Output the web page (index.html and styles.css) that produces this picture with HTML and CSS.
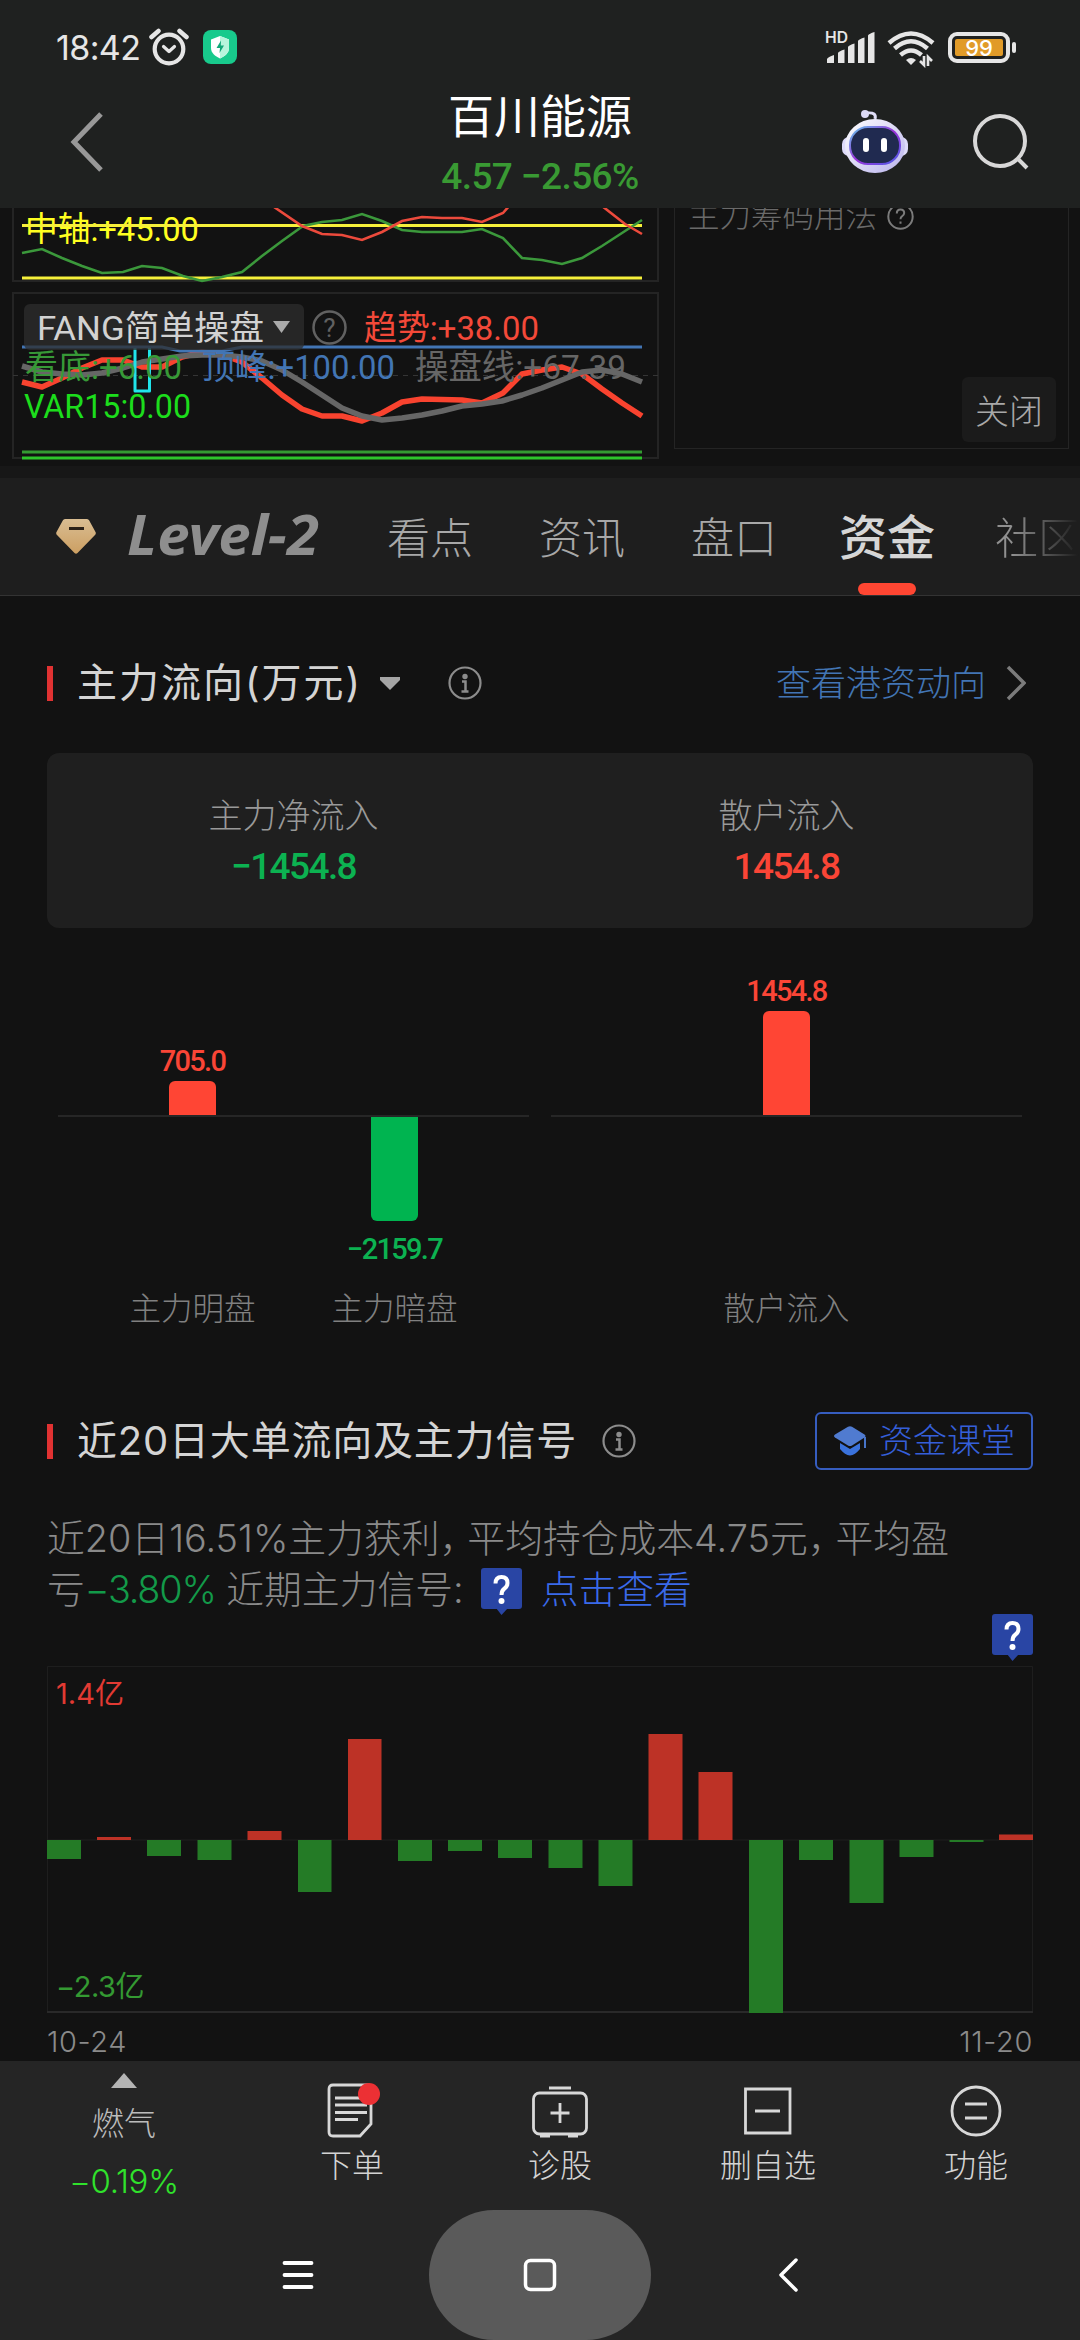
FILE: index.html
```html
<!DOCTYPE html>
<html lang="zh-CN">
<head>
<meta charset="utf-8">
<title>百川能源</title>
<link rel="stylesheet" href="styles.css">
</head>
<body>
<header class="header">
  <div class="status">
    <span class="clock">18:42</span>
    <svg class="alarm" width="40" height="38" viewBox="0 0 40 38" fill="none" stroke="#e6e6e6" stroke-linecap="round"><circle cx="20" cy="21" r="14.3" stroke-width="4.2"/><path d="M2.500 9 9.500 3M37.500 9 30.500 3" stroke-width="4.500"/><path d="M14.500 18.500 20 23.500 25.500 18.500" stroke-width="3.200" stroke-linejoin="round"/></svg>
    <svg class="shield" width="34" height="34" viewBox="0 0 34 34"><rect width="34" height="34" rx="8" fill="#18ca8c"/><path d="M17 6 26 9.500V18c0 5-4 8-9 10.500C12 26 8 23 8 18V9.500z" fill="#fff"/><path d="M17 6 26 9.500V18c0 5-4 8-9 10.500z" fill="#b8f5dc"/><path d="M18 10.500 13.500 18H17l-.5 5 4.500-7.500h-3.200z" fill="#12a878"/></svg>
    <span class="spacer"></span>
    <svg class="signal" width="52" height="40" viewBox="0 -4 52 40"><text x="0" y="12" class="hd" textLength="23" lengthAdjust="spacingAndGlyphs">HD</text><path d="M2 32V28q1-2 7-4v8zM13 32V22q1-2 6.500-3.500V32zM23 32V16q1-2 6.500-3.500V32zM33 32V10q1-2 6.500-3.500V32zM43 32V4.500q1-2 6.500-3.500V32z" fill="#e6e6e6"/></svg>
    <svg class="wifi" width="48" height="38" viewBox="0 0 48 38" fill="none" stroke="#e6e6e6" stroke-width="4.500"><path d="M2 13Q24-6 46 13"/><path d="M7.500 18.500Q24 4 40.500 18.500"/><path d="M13.500 25Q24 16 34.500 25"/><path d="M19 30q5-4 10 0l-5 5z" fill="#e6e6e6" stroke="none"/><path d="M37 26v9l-4-4M41 36v-9l4 4" stroke-width="2.600"/></svg>
    <svg class="battery" width="70" height="32" viewBox="0 0 70 32"><rect x="2" y="2" width="58" height="27" rx="7" fill="none" stroke="#e6e6e6" stroke-width="4"/><rect x="7" y="7" width="48" height="17" rx="2" fill="#e19b28"/><rect x="64" y="10" width="4" height="11" rx="2" fill="#e6e6e6"/><text x="31" y="24" text-anchor="middle" class="batt-text">99</text></svg>
  </div>
  <div class="titlebar">
    <svg width="34" height="62" viewBox="0 0 34 62" class="back"><path d="M31 3 4 31 31 59" fill="none" stroke="#989898" stroke-width="5"/></svg>
    <div class="stock"><h1>百川能源</h1><p>4.57 −2.56%</p></div>
    <svg class="robot" width="68" height="64" viewBox="0 0 68 64"><defs><linearGradient id="shell" x2="1" y2="1"><stop stop-color="#fff"/><stop offset="1" stop-color="#b9b3ec"/></linearGradient><linearGradient id="rim" x2="1" y2="1"><stop stop-color="#62c8ee"/><stop offset=".5" stop-color="#9a32d8"/><stop offset="1" stop-color="#4c5de8"/></linearGradient></defs><path d="M34 10q2-7-8-6" fill="none" stroke="#e0def8" stroke-width="3"/><circle cx="24" cy="5" r="4" fill="#dcd9f5"/><rect x="1" y="28" width="66" height="19" rx="7" fill="#dedbfa"/><ellipse cx="34" cy="37" rx="30" ry="27" fill="url(#shell)"/><rect x="9" y="18" width="50" height="37" rx="18" fill="#202a50" stroke="url(#rim)" stroke-width="2"/><rect x="22" y="29" width="6" height="14" rx="3" fill="#fff"/><rect x="40" y="29" width="6" height="14" rx="3" fill="#fff"/></svg>
    <svg class="search" width="58" height="58" viewBox="0 0 58 58" fill="none" stroke="#d8d8d8" stroke-width="4"><circle cx="28" cy="28" r="25"/><path d="M45 45 55 55"/></svg>
  </div>
</header>

<section class="charts">
  <svg class="indicators" width="660" height="258" viewBox="0 208 660 258">
    <g fill="none" stroke="#242424" stroke-width="2"><path d="M13 208V281H658V208M13 293H658V458H13z"/></g>
    <path d="M13 375.500H658" stroke="#353535" stroke-dasharray="5 5"/>
    <g class="ind-text yellow"><text x="25" y="241" textLength="174" lengthAdjust="spacingAndGlyphs">中轴:+45.00</text></g>
    <g stroke="#f6f03a" stroke-width="3"><path d="M22 225.500H642M22 278H642"/></g>
    <g fill="none" stroke-width="2.600">
      <path stroke="#3b983b" d="M22 253 42 249 62 258 82 266 102 273 123 272 142 266 162 268 183 276 202 281 222 277 242 272 262 256 282 241 303 226 322 222 342 220 362 214 382 221 402 230 422 232H462L482 229 503 238 522 258 542 260 562 264 582 258 602 246 622 233 642 220"/>
      <path stroke="#ec4a3c" d="M274 207 302 226 322 234 342 235 362 240 382 232 402 221 422 217 442 218H462L482 222 503 213 510 205M602 206 625 224 642 234"/>
    </g>
    <g fill="none" stroke-linejoin="round">
      <path stroke="#f9432f" stroke-width="5.500" d="M22 382 42 387 62 378 82 368 102 360H123L142 367H162L182 357 202 352 222 355 242 362 262 378 282 395 302 409 322 416H342L362 421 382 413 402 402 422 399 462 400 482 403 503 393 522 374 542 370 562 367 582 374 602 389 622 403 642 416"/>
      <path stroke="#666" stroke-width="5.500" d="M22 366 42 372 62 374 82 375 102 373 123 368 142 362 162 359 182 356 202 355H222L242 357 262 361 282 370 302 382 322 395 342 408 362 416 382 420 402 418 422 415 442 411 462 406 482 404 502 401 522 395 542 388 562 380 582 372 602 370 622 374 642 382"/>
      <path stroke="#20e4ea" stroke-width="3" d="M135 347V391H149.500V347"/>
    </g>
    <path d="M22 347H162L180 351H222L242 347H642" fill="none" stroke="#4275b4" stroke-width="3"/>
    <path d="M22 452H642" stroke="#349a32" stroke-width="3"/><path d="M22 458H642" stroke="#2dc52b" stroke-width="3"/>
    <rect x="24" y="304" width="280" height="46" rx="6" fill="#2d2d2d" fill-opacity=".75"/>
    <g class="ind-text">
      <text x="37" y="340" fill="#d2d2d2" textLength="227" lengthAdjust="spacingAndGlyphs">FANG简单操盘</text>
      <path d="M273 321H290L281.500 333z" fill="#aaa"/>
      <circle cx="329.500" cy="327.500" r="16" fill="none" stroke="#616161" stroke-width="2.500"/>
      <text x="329.500" y="337" text-anchor="middle" fill="#616161" class="ask">?</text>
      <text x="364" y="340" fill="#f34939" textLength="175" lengthAdjust="spacingAndGlyphs">趋势:+38.00</text>
      <text x="25" y="379" fill="#379937" textLength="157" lengthAdjust="spacingAndGlyphs">看底:+6.00</text>
      <text x="202" y="379" fill="#4275b4" textLength="193" lengthAdjust="spacingAndGlyphs">顶峰:+100.00</text>
      <text x="415" y="379" fill="#666" textLength="211" lengthAdjust="spacingAndGlyphs">操盘线:+67.39</text>
      <text x="24" y="418" fill="#1cdd1c" textLength="167" lengthAdjust="spacingAndGlyphs">VAR15:0.00</text>
    </g>
  </svg>
  <div class="chips">
    <div class="chips-help">主力筹码用法<svg width="27" height="27" viewBox="0 0 27 27"><circle cx="13.500" cy="13.500" r="12.200" fill="none" stroke="#7b7b7b" stroke-width="2"/><path d="M9.800 10.500q0-4 3.700-4t3.700 3.600q0 2-2.200 3.200-1.500.9-1.500 3M13.500 18.500v2.200" fill="none" stroke="#7b7b7b" stroke-width="2"/></svg></div>
    <button class="close">关闭</button>
  </div>
</section>

<nav class="tabs">
  <svg class="gem" width="40" height="35" viewBox="0 0 40 35"><defs><linearGradient id="gold" x2="0" y2="1"><stop stop-color="#d9bd92"/><stop offset="1" stop-color="#cc9f62"/></linearGradient></defs><path d="M9 0H31q1.500 0 2.200 1.500L39.500 13q.8 1.500-.5 3L21.500 34q-1.500 1.300-3 0L1 16q-1.300-1.500-.5-3L6.800 1.500Q7.500 0 9 0z" fill="url(#gold)"/><path d="M13 9.500H28" stroke="#2b2118" stroke-width="3"/></svg>
  <svg class="level" width="196" height="80" viewBox="0 -12 196 80"><text x="0" y="42" textLength="192" lengthAdjust="spacingAndGlyphs">Level−2</text></svg>
  <a class="tab t1">看点</a><a class="tab t2">资讯</a><a class="tab t3">盘口</a><a class="tab active">资金</a><a class="tab fade">社区</a>
</nav>

<main>
  <div class="section-head first">
    <i class="mark"></i><h2>主力流向(万元)</h2>
    <svg class="drop" width="20" height="13" viewBox="0 0 20 13"><path d="M0 0H20V3L10 13 0 3z" fill="#a5a5a5"/></svg>
    <svg class="info" width="34" height="34" viewBox="0 0 34 34"><use href="#info"/></svg>
    <span class="spacer"></span>
    <a class="link">查看港资动向</a>
    <svg class="go" width="20" height="36" viewBox="0 0 20 36"><path d="M2 2 18 18 2 34" fill="none" stroke="#7b7b7b" stroke-width="3.500"/></svg>
  </div>
  <div class="card">
    <div><span>主力净流入</span><b class="down">−1454.8</b></div>
    <div><span>散户流入</span><b class="up">1454.8</b></div>
  </div>
  <div class="flow">
    <div class="flow-group">
      <div class="flow-col"><div class="above"><b class="up">705.0</b><i class="bar rise" style="height:34px"></i></div><div class="below"></div><span>主力明盘</span></div>
      <div class="flow-col"><div class="above"></div><div class="below"><i class="bar fall" style="height:104px"></i><b class="down">−2159.7</b></div><span>主力暗盘</span></div>
    </div>
    <div class="flow-group">
      <div class="flow-col"><div class="above"><b class="up">1454.8</b><i class="bar rise" style="height:104px"></i></div><div class="below"></div><span>散户流入</span></div>
    </div>
  </div>
  <div class="section-head second">
    <i class="mark"></i><h2>近20日大单流向及主力信号</h2>
    <svg class="info" width="34" height="34" viewBox="0 0 34 34"><g id="info"><circle cx="17" cy="17" r="15.500" fill="none" stroke="#8c8c8c" stroke-width="2.200"/><circle cx="17" cy="10.500" r="2.700" fill="#8c8c8c"/><path d="M14 15.500H17.500V25M13.500 25.500H20.500" fill="none" stroke="#8c8c8c" stroke-width="2.500"/></g></svg>
    <span class="spacer"></span>
    <button class="class-btn"><svg width="34" height="30" viewBox="0 0 34 30"><path d="M15 .8q2-1 4 0L31.500 8.500q2 1.500 0 3L19 19.500q-2 1.200-4 0L2 11.500q-2-1.500 0-3z" fill="#507bd0"/><path d="M7 17 17 23 27 17V23Q22 29 17 29.500 12 29 7 23z" fill="#3a72dc"/><path d="M32 11V22" stroke="#4774c8" stroke-width="2"/></svg>资金课堂</button>
  </div>
  <div class="summary">
    <p>近20日16.51%主力获利<span class="comma">，</span>平均持仓成本4.75元<span class="comma">，</span>平均盈</p>
    <p>亏<em>−3.80%</em> 近期主力信号:<svg class="q" width="41" height="48" viewBox="0 0 41 48"><g id="q"><rect width="41" height="41" rx="3" fill="#2945a4"/><path d="M15 40H27L20.500 47z" fill="#2945a4"/><path d="M14.500 15.500Q14.500 9 20.500 9T26.500 15Q26.500 18.500 23.500 20.500 20.500 22.500 20.500 27" fill="none" stroke="#fff" stroke-width="4"/><circle cx="20.500" cy="33" r="3" fill="#fff"/></g></svg><a>点击查看</a></p>
  </div>
  <div class="signal-row"><svg width="41" height="48" viewBox="0 0 41 48"><use href="#q"/></svg></div>
  <div class="history">
    <span class="max">1.4亿</span>
    <svg width="986" height="347" viewBox="0 0 986 347">
      <path d="M.5 347V.5H985.500V347M0 174H986" fill="none" stroke="#1e1e1e"/><path d="M0 346H986" stroke="#292929" stroke-width="2"/>
      <g fill="#bd3226"><path d="M50 171h34v3h-34zM200.500 165h34v9h-34zM301 73h33.500v101H301zM601.500 68h34v106h-34zM651.500 106h34v68h-34zM952 168.500h34v5.500h-34z"/></g>
      <g fill="#247b26"><path d="M0 174h34v19H0zM100 174h34v16h-34zM150.500 174h34v20h-34zM251 174h33.500v52H251zM351 174h34v21h-34zM401 174h34v11h-34zM451 174h34v18h-34zM501.500 174h34v28h-34zM551.500 174h34v46h-34zM702 174h34v173h-34zM752 174h34v20h-34zM802.500 174h34v63h-34zM852.500 174h34v17h-34zM902.500 174h34v2h-34z"/></g>
    </svg>
    <span class="min">−2.3亿</span>
  </div>
  <div class="dates"><span>10-24</span><span>11-20</span></div>
</main>

<footer>
  <div class="actions">
    <div class="sector"><svg width="26" height="15" viewBox="0 0 26 15"><path d="M13 0 26 15H0z" fill="#b4b4b4"/></svg><span>燃气</span><b>−0.19%</b></div>
    <div class="action"><svg width="56" height="56" viewBox="0 0 56 56" fill="none" stroke="#d8d8d8" stroke-width="2.800"><path d="M9 3H43Q47 3 47 7V42L36 54H9Q5 54 5 50V7Q5 3 9 3zM11 16H36M11 23H43M11 30.500H43M11 37.500H34"/><circle cx="45" cy="12" r="11" fill="#ec3034" stroke="none"/></svg><span>下单</span></div>
    <div class="action"><svg width="56" height="56" viewBox="0 0 56 56" fill="none" stroke="#d8d8d8" stroke-width="2.800"><rect x="1.500" y="11" width="53" height="41" rx="6"/><path d="M17 6H39M28 21V41M18.500 31H37.500"/><path d="M8 53.500H18M36 53.500H46" stroke-width="4"/></svg><span>诊股</span></div>
    <div class="action"><svg width="56" height="56" viewBox="0 0 56 56" fill="none" stroke="#d8d8d8" stroke-width="2.800"><path d="M5.500 7H50V51H5.500zM15 29H40"/></svg><span>删自选</span></div>
    <div class="action"><svg width="56" height="56" viewBox="0 0 56 56" fill="none" stroke="#d8d8d8" stroke-width="2.800"><circle cx="28" cy="29" r="24"/><path d="M17 22H39M17 36H39"/></svg><span>功能</span></div>
  </div>
  <div class="sysnav">
    <svg width="34" height="34" viewBox="0 0 34 34"><path d="M3.500 5H30.500M3.500 17H30.500M3.500 29H30.500" stroke="#fff" stroke-width="3.800" stroke-linecap="round"/></svg>
    <div class="home"><svg width="36" height="36" viewBox="0 0 36 36"><rect x="3.500" y="3.500" width="29" height="29" rx="5" fill="none" stroke="#fff" stroke-width="3.500"/></svg></div>
    <svg width="34" height="34" viewBox="0 0 34 34"><path d="M24 2 9 17 24 32" fill="none" stroke="#fff" stroke-width="3.500" stroke-linecap="round" stroke-linejoin="round"/></svg>
  </div>
</footer>
</body>
</html>
```
FILE: styles.css
```css
* { box-sizing: border-box; }
body {
  margin: 0; width: 1080px; height: 2340px; overflow: hidden;
  display: flex; flex-direction: column;
  background: #121212; color: #d4d4d4;
  font-family: Inter, "Noto Sans CJK SC", sans-serif; font-weight: 300;
}
h1, h2, p { margin: 0; font-weight: 300; }
svg { display: block; flex: none; }
button { border: 0; margin: 0; padding: 0; font: inherit; color: inherit; }
.spacer { flex: 1; }
.up { color: #fa4536; }
.down { color: #0cb251; }

/* Header */
.header { height: 208px; background: #1f2120; flex: none; }
.status { height: 94px; display: flex; align-items: flex-start; padding: 0 62px 0 56px; }
.clock { width: 93px; margin-top: 26px; font-size: 34px; line-height: 44px; letter-spacing: -.6px; color: #e6e6e6; white-space: nowrap; font-weight: 400; }
.alarm { margin-top: 28px; }
.shield { margin: 30px 0 0 14px; }
.signal { margin-top: 27px; }
.wifi { margin: 30px 0 0 10px; }
.battery { margin: 32px 0 0 13px; }
.hd { font: 600 16px Inter, sans-serif; fill: #e6e6e6; }
.batt-text { font: 500 22px Inter, sans-serif; fill: #fff; }
.titlebar { display: grid; grid-template-columns: 300px 1fr 122px 178px; height: 114px; }
.back { margin: 17px 0 0 70px; }
.stock { width: 480px; margin-top: -1px; text-align: center; }
.stock h1 { font-size: 46px; line-height: 46px; color: #fff; font-weight: 400; }
.stock p { margin-top: 15px; font: 500 37px/46px Roboto, sans-serif; letter-spacing: -.6px; color: #399a33; white-space: nowrap; }
.robot { margin: 15px 0 0 61px; }
.search { margin: 19px 0 0 70px; }

/* Indicator charts */
.charts { height: 270px; flex: none; display: flex; border-bottom: 12px solid #171717; overflow: hidden; }
.ind-text { font: 400 34px Roboto, "Noto Sans CJK SC", sans-serif; }
.ind-text .ask { font-size: 26px; }
.yellow { fill: #ffff20; }
.chips { width: 395px; height: 241px; margin-left: 14px; border: solid #242424; border-width: 0 1px 1px; display: flex; flex-direction: column; justify-content: space-between; align-items: flex-start; padding: 0 12px 6px 13px; }
.chips-help { display: flex; gap: 10px; align-items: center; margin-top: -9px; height: 34px; font-size: 31.500px; line-height: 34px; color: #6a6a6a; }
.close { width: 94px; height: 65px; align-self: flex-end; background: #1b1b1b; border-radius: 6px; color: #a8a8a8; font-size: 34px; }

/* Tabs */
.tabs { height: 118px; flex: none; display: flex; align-items: flex-start; background: #1e1e1e; border-bottom: 1px solid #333; overflow: hidden; }
.gem { margin: 41px 0 0 56px; }
.level { margin: 23px 0 0 31px; }
.level text { font: italic 700 56px "Noto Sans", sans-serif; fill: #8e8e8e; }
.tab { height: 117px; font-size: 43px; line-height: 120px; color: #a8a8a8; white-space: nowrap; width: 86px; }
.t1 { margin-left: 64px; }
.t2 { margin-left: 66px; }
.t3 { margin-left: 66px; }
.active { margin-left: 62px; width: 96px; color: #d6d6d6; font-size: 48px; font-weight: 500; display: flex; flex-direction: column; align-items: center; }
.active::after { content: ""; flex: none; width: 58px; height: 12px; margin-top: -15px; border-radius: 6px; background: #ff4632; }
.fade { margin-left: 60px; background: linear-gradient(90deg, #909090 20%, #1e1e1e 96%); -webkit-background-clip: text; background-clip: text; color: transparent; }

/* Sections */
main { height: 1465px; flex: none; padding: 0 47px; }
.section-head { display: flex; align-items: center; height: 58px; }
.section-head h2 { margin-left: 24px; font-size: 40px; color: #d4d4d4; line-height: 60px; font-weight: 400; white-space: nowrap; }
.first h2 { width: 279px; letter-spacing: 2px; }
.second h2 { width: 496px; letter-spacing: .8px; }
.mark { width: 6px; height: 35px; background: #e13232; }
.first { margin-top: 58px; }
.drop { margin-left: 24px; }
.info { margin-left: 29px; }
.first .info { margin-left: 48px; }
.link { color: #4275b4; font-size: 35px; line-height: 40px; }
.go { margin: 0 7px 0 20px; }
.card { margin-top: 41px; height: 175px; display: grid; grid-template-columns: 1fr 1fr; background: #1f1f1f; border-radius: 12px; text-align: center; }
.card div { padding-top: 41px; }
.card span { display: block; font-size: 34px; line-height: 44px; color: #999; }
.card b { display: block; margin-top: 6px; font: 500 37px/46px Roboto, sans-serif; letter-spacing: -1.600px; }
.flow { display: flex; gap: 22px; padding: 0 11px; }
.flow-group { width: 471px; display: flex; justify-content: center; background: linear-gradient(#262626, #262626) 0 187px / 100% 2px no-repeat; }
.flow-col { width: 202px; display: flex; flex-direction: column; align-items: center; }
.flow b { font: 500 29px/34px Roboto, sans-serif; letter-spacing: -1.700px; }
.above { height: 187px; display: flex; flex-direction: column; align-items: center; justify-content: flex-end; gap: 3px; }
.below { height: 154px; margin-top: 2px; display: flex; flex-direction: column; align-items: center; gap: 11px; }
.bar { width: 47px; }
.rise { background: #ff4534; border-radius: 6px 6px 0 0; }
.fall { background: #00b450; border-radius: 0 0 6px 6px; }
.flow span { margin-top: 18px; font-size: 31.500px; line-height: 40px; color: #808080; white-space: nowrap; }
.second { margin-top: 83px; }
.class-btn { width: 218px; height: 58px; display: flex; align-items: center; justify-content: center; gap: 12px; background: none; border: 2px solid #365dc0; border-radius: 6px; color: #355fd9; font-size: 34px; line-height: 50px; }
.summary { margin-top: 43px; font-size: 37.800px; line-height: 51px; color: #8a8a8a; height: 102px; }
.summary p { height: 51px; display: flex; align-items: center; white-space: pre; }
.comma { letter-spacing: -10px; }
.summary em { font-style: normal; letter-spacing: -1.200px; color: #129a49; }
.summary .q { margin: 4px 19px 0 17px; }
.summary a { color: #3a6aea; }
.signal-row { display: flex; justify-content: flex-end; margin-top: -1px; height: 52px; }
.history { height: 347px; display: grid; font-size: 29px; line-height: 36px; font-weight: 400; }
.history > * { grid-area: 1 / 1; }
.max { padding: 10px 0 0 9px; color: #e23a33; }
.min { padding: 0 0 8px 9px; align-self: end; color: #349a32; letter-spacing: -.5px; }
.dates { display: flex; justify-content: space-between; margin-top: 11px; font-size: 29px; line-height: 36px; letter-spacing: .6px; color: #8a8a8a; }

/* Bottom bars */
footer { flex: 1; background: #252525; }
.actions { display: grid; grid-template-columns: 248px repeat(4, 208px); height: 149px; }
.sector, .action { display: flex; flex-direction: column; align-items: center; }
.sector svg { margin-top: 12px; }
.sector span, .action span { font-size: 32px; line-height: 40px; color: #bcbcbc; }
.sector span { margin-top: 16px; }
.sector b { margin-top: 17px; font-size: 33px; font-weight: 300; line-height: 40px; letter-spacing: -.3px; color: #30e22c; }
.action svg { margin-top: 21px; }
.action span { margin-top: 8px; color: #d4d4d4; }
.sysnav { height: 130px; display: grid; grid-template-columns: 165px 222px 165px; justify-content: center; align-items: center; }
.sysnav > svg:first-child { margin-left: 17px; }
.sysnav > svg:last-child { margin-left: 121px; }
.home { width: 222px; height: 130px; border-radius: 65px; background: #5a5a5a; display: grid; place-items: center; }
```
